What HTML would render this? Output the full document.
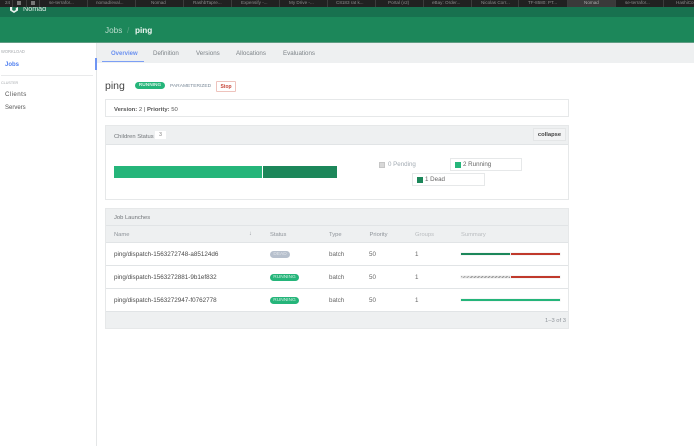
<!DOCTYPE html>
<html><head><meta charset="utf-8"><style>
html,body{margin:0;padding:0;width:694px;height:446px;overflow:hidden;background:#fff;font-family:"Liberation Sans",sans-serif;color:#4a4a4a}
#w{position:absolute;left:0;top:0;width:694px;height:446px;filter:blur(.3px)}
.a{position:absolute;white-space:nowrap}
.t{font-size:4.6px;color:#8a8a8a;top:0;line-height:5px}
.sep{position:absolute;top:0;width:1px;height:7px;background:#3c3c3c}
.box{position:absolute;box-sizing:border-box;border:1px solid #e6e8e9;background:#fff}
.hd{position:absolute;background:#eef0f1}
.line{position:absolute;height:1px;background:#e1e4e6}
.f{font-size:6.2px;line-height:8px}
.n{font-size:6.3px;line-height:8px;color:#4a4a4a}
.h{font-size:5.8px;line-height:8px}
.pill{position:absolute;border-radius:4px;color:#d3f0e2;background:#25b57a;font-size:4.8px;line-height:7px;text-align:center;height:7px}
.bar{position:absolute;height:2px;box-shadow:0 0 0 .5px rgba(200,200,200,.35)}
</style></head><body><div id="w">
<div class="a" style="left:0;top:7px;width:694px;height:10px;background:#18714f"></div>
<div class="a" style="left:0;top:17px;width:694px;height:25px;background:#1c875a"></div>
<div class="a" style="left:0;top:42px;width:694px;height:1px;background:#5f9c83"></div>
<svg class="a" style="left:10px;top:5px" width="8" height="8" viewBox="0 0 8 8"><path d="M0 2V5.5L4 8L8 5.5V2L5.8 3V5L4 6L2.2 5V0Z" fill="#e8f1ed"/></svg>
<div class="a" style="left:23px;top:4px;font-size:7.2px;line-height:10px;color:#dbe9e3">Nomad</div>
<div class="a" style="left:0;top:0;width:694px;height:7px;background:#212121"></div>
<div class="a" style="left:567px;top:0;width:48px;height:7px;background:#3a3a3a"></div>
<div class="sep" style="left:12px"></div><div class="sep" style="left:26px"></div><div class="sep" style="left:39px"></div>
<div class="sep" style="left:87px"></div><div class="sep" style="left:135px"></div><div class="sep" style="left:183px"></div><div class="sep" style="left:231px"></div><div class="sep" style="left:279px"></div><div class="sep" style="left:327px"></div><div class="sep" style="left:375px"></div><div class="sep" style="left:423px"></div><div class="sep" style="left:471px"></div><div class="sep" style="left:518px"></div><div class="sep" style="left:567px"></div><div class="sep" style="left:615px"></div><div class="sep" style="left:663px"></div>
<div class="a t" style="left:5px">24</div><div class="a" style="left:17px;top:1px;width:4px;height:4px;background:#777"></div><div class="a" style="left:31px;top:1px;width:4px;height:4px;background:#777"></div>
<div class="a t" style="left:49px">se-terrafor...</div><div class="a t" style="left:96px">nomad/eval...</div><div class="a t" style="left:151px">Nomad</div><div class="a t" style="left:193px">RashbTapre...</div><div class="a t" style="left:241px">Expensify -...</div><div class="a t" style="left:289px">My Drive -...</div><div class="a t" style="left:336px">C8183 rat k...</div><div class="a t" style="left:388px">Portal (v2)</div><div class="a t" style="left:432px">eBay: Order...</div><div class="a t" style="left:481px">Nicolas Corr...</div><div class="a t" style="left:528px">TF-8580: PT...</div><div class="a t" style="left:584px;color:#aaa">Nomad</div><div class="a t" style="left:625px">se-terrafor...</div><div class="a t" style="left:676px">HashiCor</div>
<div class="a" style="left:105px;top:25px;font-size:8.2px;line-height:11px;color:#bcdccd">Jobs</div>
<div class="a" style="left:127px;top:25px;font-size:8.2px;line-height:11px;color:#5fa586">/</div>
<div class="a" style="left:135px;top:25px;font-size:8.2px;line-height:11px;color:#eef6f2;font-weight:bold">ping</div>

<div class="a" style="left:96px;top:43px;width:1px;height:403px;background:#e4e6e7"></div>
<div class="a" style="left:1px;top:49px;font-size:4.1px;line-height:6px;color:#a5a9ad">WORKLOAD</div>
<div class="a" style="left:5px;top:61px;font-size:6px;line-height:8px;color:#4f7ff0;font-weight:bold">Jobs</div>
<div class="a" style="left:95px;top:58px;width:2px;height:12px;background:#6f95f3"></div>
<div class="a" style="left:1px;top:75px;width:92px;height:1px;background:#e9eaeb"></div>
<div class="a" style="left:1px;top:80px;font-size:3.7px;line-height:6px;color:#a5a9ad">CLUSTER</div>
<div class="a f" style="left:5px;top:91px;color:#555;letter-spacing:.4px">Clients</div>
<div class="a" style="left:5px;top:104px;font-size:6px;line-height:8px;color:#555">Servers</div>

<div class="hd" style="left:97px;top:43px;width:597px;height:20px"></div>
<div class="a" style="left:102px;top:61px;width:42px;height:1px;background:#7c9ff5"></div>
<div class="a" style="left:111px;top:50px;font-size:6px;line-height:8px;color:#6a90f0;font-weight:bold">Overview</div>
<div class="a f" style="left:153px;top:50px;color:#7d8388">Definition</div>
<div class="a f" style="left:196px;top:50px;color:#7d8388">Versions</div>
<div class="a f" style="left:236px;top:50px;color:#7d8388">Allocations</div>
<div class="a f" style="left:283px;top:50px;color:#7d8388">Evaluations</div>

<div class="a" style="left:105px;top:79px;font-size:10.5px;line-height:14px;color:#444">ping</div>
<div class="pill" style="left:135px;top:82px;width:30px;font-weight:bold">RUNNING</div>
<div class="a" style="left:170px;top:84px;font-size:4.9px;line-height:6px;color:#7b8a99">PARAMETERIZED</div>
<div class="a" style="left:216px;top:81px;width:20px;height:11px;box-sizing:border-box;border:1px solid #eec3bd;border-radius:1px;font-size:5px;line-height:10px;text-align:center;color:#c8483c;font-weight:bold">Stop</div>

<div class="box" style="left:105px;top:99px;width:464px;height:18px"></div>
<div class="a" style="left:114px;top:106px;font-size:5.9px;line-height:8px;color:#555"><b>Version:</b> 2 | <b>Priority:</b> 50</div>

<div class="box" style="left:105px;top:125px;width:464px;height:75px"></div>
<div class="hd" style="left:106px;top:126px;width:462px;height:18px;border-bottom:1px solid #e1e4e6"></div>
<div class="a h" style="left:114px;top:133px;color:#707478">Children Status</div>
<div class="a" style="left:155px;top:131px;width:11px;height:8px;background:#fff;font-size:5px;line-height:9px;text-align:center;color:#777">3</div>
<div class="a" style="left:533px;top:128px;width:33px;height:13px;box-sizing:border-box;border:1px solid #e4e6e7;background:#f2f3f4;font-size:5.8px;line-height:12px;text-align:center;color:#444;font-weight:bold">collapse</div>
<div class="a" style="left:114px;top:166px;width:148px;height:12px;background:#25b57a"></div>
<div class="a" style="left:263px;top:166px;width:74px;height:12px;background:#1c875a"></div>
<div class="a" style="left:379px;top:162px;width:6px;height:6px;background:#d8d8d8;box-sizing:border-box;border:1px solid #c6c6c6"></div>
<div class="a f" style="left:388px;top:161px;color:#a3abb3">0 Pending</div>
<div class="box" style="left:450px;top:158px;width:72px;height:13px"></div>
<div class="a" style="left:455px;top:162px;width:6px;height:6px;background:#25b57a"></div>
<div class="a f" style="left:463px;top:161px;color:#666">2 Running</div>
<div class="box" style="left:412px;top:173px;width:73px;height:13px"></div>
<div class="a" style="left:417px;top:177px;width:6px;height:6px;background:#1c875a"></div>
<div class="a f" style="left:425px;top:176px;color:#666">1 Dead</div>

<div class="box" style="left:105px;top:208px;width:464px;height:121px"></div>
<div class="hd" style="left:106px;top:209px;width:462px;height:16px;border-bottom:1px solid #e1e4e6"></div>
<div class="a h" style="left:114px;top:214px;color:#707478">Job Launches</div>
<div class="hd" style="left:106px;top:226px;width:462px;height:16px"></div>
<div class="line" style="left:106px;top:242px;width:462px"></div>
<div class="line" style="left:106px;top:265px;width:462px"></div>
<div class="line" style="left:106px;top:288px;width:462px"></div>
<div class="line" style="left:106px;top:311px;width:462px"></div>
<div class="hd" style="left:106px;top:312px;width:462px;height:16px"></div>
<div class="a h" style="left:114px;top:231px;color:#8e9399">Name</div>
<div class="a h" style="left:249px;top:230px;color:#8e9399">↓</div>
<div class="a h" style="left:270px;top:231px;color:#8e9399">Status</div>
<div class="a h" style="left:329px;top:231px;color:#8e9399">Type</div>
<div class="a h" style="left:369.5px;top:231px;color:#8e9399">Priority</div>
<div class="a h" style="left:415px;top:231px;color:#b9bcbf">Groups</div>
<div class="a h" style="left:461px;top:231px;color:#b9bcbf">Summary</div>

<div class="a n" style="left:114px;top:251px">ping/dispatch-1563272748-a85124d6</div>
<div class="pill" style="left:270px;top:251px;width:20px;background:#b7c0cd;color:#dfe3e8">DEAD</div>
<div class="a f" style="left:329px;top:251px;color:#666">batch</div><div class="a f" style="left:369px;top:251px;color:#666">50</div><div class="a f" style="left:415px;top:251px;color:#666">1</div>
<div class="bar" style="left:461px;top:253px;width:49px;background:#1c875a"></div>
<div class="bar" style="left:511px;top:253px;width:49px;background:#c0392b"></div>

<div class="a n" style="left:114px;top:274px">ping/dispatch-1563272881-9b1ef832</div>
<div class="pill" style="left:270px;top:274px;width:29px">RUNNING</div>
<div class="a f" style="left:329px;top:274px;color:#666">batch</div><div class="a f" style="left:369px;top:274px;color:#666">50</div><div class="a f" style="left:415px;top:274px;color:#666">1</div>
<div class="bar" style="left:461px;top:276px;width:49px;background:repeating-linear-gradient(135deg,#999 0 1px,#ddd 1px 2.5px)"></div>
<div class="bar" style="left:511px;top:276px;width:49px;background:#c0392b"></div>

<div class="a n" style="left:114px;top:297px">ping/dispatch-1563272947-f0762778</div>
<div class="pill" style="left:270px;top:297px;width:29px">RUNNING</div>
<div class="a f" style="left:329px;top:297px;color:#666">batch</div><div class="a f" style="left:369px;top:297px;color:#666">50</div><div class="a f" style="left:415px;top:297px;color:#666">1</div>
<div class="bar" style="left:461px;top:299px;width:99px;background:#25b57a"></div>
<div class="a h" style="left:545px;top:317px;color:#8e9399">1–3 of 3</div>
</div></body></html>
